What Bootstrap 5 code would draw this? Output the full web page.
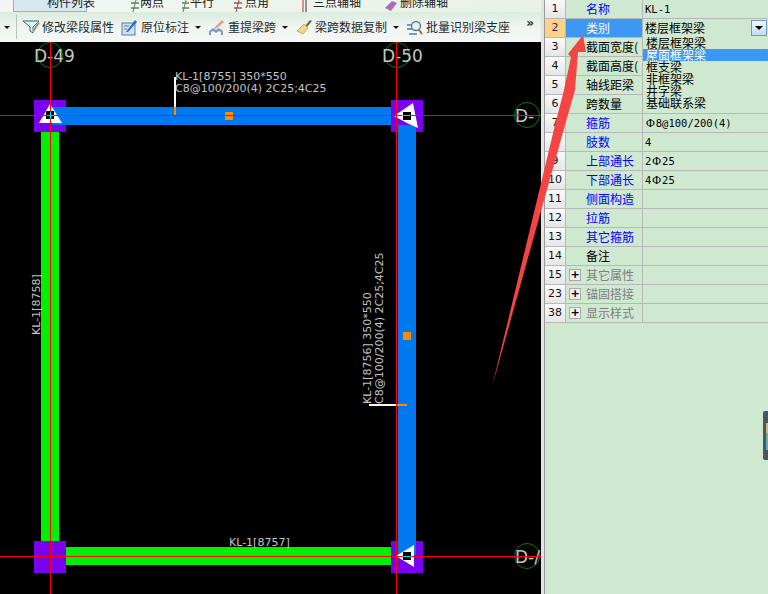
<!DOCTYPE html>
<html lang="zh">
<head>
  <meta charset="UTF-8" />
  <title>梁属性</title>
  <link href="https://cdn.jsdelivr.net/npm/bootstrap@5.3.0/dist/css/bootstrap.min.css" rel="stylesheet" />
  <style>
    html, body { height: 594px; overflow: hidden; }
    body { font-family: "Noto Sans CJK SC", "Liberation Sans", sans-serif; background: #cfe8d0; color: #000; }
    .app-shell { width: 768px; height: 594px; }
    .left-pane { width: 541px; }
    .split-bar { width: 4px; background: #e4e4e4; border-right: 1px solid #9a9a9a; }
    .right-pane { width: 223px; }

    .tool-top { height: 12px; background: linear-gradient(90deg, #f2f6f2, #e8f2e8); overflow: hidden; font-size: 12px; line-height: 16px; color: #222; white-space: nowrap; }
    .tool-top > span, .tool-top > svg { flex: none; }
    .top-label { margin-top: -6px; }
    .tool-active { width: 74px; height: 12px; border: 1px solid #8fb2cf; border-top: 0; background: #d8e8f2; margin-left: 13px; padding-left: 33px; flex: none; }
    .tool-main { height: 30px; background: linear-gradient(#dcecdf, #f1f6f1 55%, #f4f7f3); font-size: 12px; color: #1d2b33; white-space: nowrap; position: relative; padding-left: 4px; }
    .tool-main svg { flex: none; }
    .tool-sep { width: 1px; height: 24px; background: #b9c4bb; margin-left: 6px; }
    .caret-dn { width: 0; height: 0; border-left: 3px solid transparent; border-right: 3px solid transparent; border-top: 3px solid #111; }
    .gap-1px { margin-left: 1px; }
    .gap-2px { margin-left: 2px; }
    .gap-3px { margin-left: 3px; }
    .gap-5px { margin-left: 5px; }
    .gap-6px { margin-left: 6px; }
    .gap-7px { margin-left: 7px; }
    .gap-8px { margin-left: 8px; }
    .gap-17px { margin-left: 17px; }
    .gap-19px { margin-left: 19px; }
    .gap-22px { margin-left: 22px; }
    .gap-31px { margin-left: 31px; }
    .gap-43px { margin-left: 43px; }
    .more-mark { position: absolute; right: 7px; top: 5px; font-size: 12px; line-height: 12px; font-family: "DejaVu Sans", sans-serif; font-weight: 700; }

    .cad-view { width: 541px; height: 552px; display: block; background: #000; }
    .cad-view text { font-family: "DejaVu Sans", "Liberation Sans", sans-serif; fill: #c4c4c4; }

    .prop-row { height: 19px; display: flex; font-size: 12px; line-height: 18px; }
    .prop-no { width: 21px; flex: none; background: linear-gradient(#fafafa, #e6e6e6); border-right: 1px solid #b8b8b8; border-bottom: 1px solid #b8b8b8; text-align: center; font-size: 11px; font-family: "DejaVu Sans", sans-serif; color: #111; }
    .prop-no.is-on { background: #ffd28a; color: #402060; }
    .prop-name { width: 77px; flex: none; padding-left: 20px; border-right: 1px solid #b8b8b8; border-bottom: 1px solid #b8b8b8; white-space: nowrap; overflow: hidden; position: relative; }
    .prop-name.is-link { color: #0000ff; }
    .prop-name.is-grey { color: #808080; }
    .prop-name.is-on { background: #3d98f5; color: #fff; }
    .prop-val { flex: 1; padding-left: 2px; border-bottom: 1px solid #b8b8b8; font-size: 12px; white-space: nowrap; position: relative; }
    .prop-val.mono-val { font-family: "DejaVu Sans Mono", monospace; font-size: 10.5px; }
    .rebar-mark { font-family: "Liberation Serif", serif; font-size: 12px; margin: 0 1px; }
    .expand-box { position: absolute; left: 3px; top: 3px; width: 12px; height: 12px; border: 1px solid #aaa; background: #eee; font: 700 11px/10px "DejaVu Sans", sans-serif; color: #000; text-align: center; }
    .combo-btn { position: absolute; right: 1px; top: 1px; width: 16px; height: 16px; background: linear-gradient(#f0f6fb, #c4dcf0); border: 1px solid #6f98bd; }
    .combo-btn::after { content: ""; position: absolute; left: 3px; top: 5px; border-left: 4px solid transparent; border-right: 4px solid transparent; border-top: 4px solid #000; }

    .combo-list { position: absolute; left: 643px; top: 37px; width: 125px; height: 74px; font-size: 12px; line-height: 12px; background: #cfe8d0; }
    .combo-list div { height: 12px; padding-left: 3px; white-space: nowrap; }
    .combo-list .is-pick { background: #3d98f5; color: #fff; outline: 1px dotted #ff6a10; outline-offset: -1px; }
    .side-handle { position: absolute; right: 0; top: 411px; width: 5px; height: 49px; border-radius: 2px 0 0 2px; background: linear-gradient(#4b5660 25%, #c9bd60 25%, #c9bd60 45%, #5bb5a8 45%, #5bb5a8 80%, #4b5660 80%); border-left: 3px solid #4b5660; }
    .arrow-over { position: absolute; left: 0; top: 0; pointer-events: none; }
  </style>
</head>
<body>
<div class="app-shell d-flex position-relative">
  <div class="left-pane">
    <div class="tool-top d-flex align-items-start">
      <div class="tool-active"><span class="d-block top-label">构件列表</span></div>
      <svg class="gap-43px" width="10" height="12" viewBox="0 0 10 12"><path d="M1 3h8M1 8h8" stroke="#333"/><path d="M6 0L3 12" stroke="#3a9a5a"/></svg>
      <span class="top-label">两点</span>
      <svg class="gap-17px" width="9" height="12" viewBox="0 0 9 12"><path d="M1 3h7M1 8h7" stroke="#333"/><path d="M5 0L2 12" stroke="#3a9a5a"/></svg>
      <span class="top-label">平行</span>
      <svg class="gap-19px" width="11" height="12" viewBox="0 0 11 12"><path d="M1 3h8M1 8h8" stroke="#333"/><path d="M6 0L3 12" stroke="#c03030"/></svg>
      <span class="top-label gap-1px">点角</span>
      <svg class="gap-31px" width="8" height="12" viewBox="0 0 8 12"><path d="M3 0v12" stroke="#c03030"/><path d="M6 0v12" stroke="#333"/></svg>
      <span class="top-label gap-5px">三点辅轴</span>
      <svg class="gap-22px" width="16" height="12" viewBox="0 0 16 12"><path d="M2 8l7-7 5 2-6 8z" fill="#b06ac0"/></svg>
      <span class="top-label gap-1px">删除辅轴</span>
    </div>
    <div class="tool-main d-flex align-items-center">
      <span class="caret-dn"></span>
      <span class="tool-sep"></span>
      <svg class="gap-5px" width="20" height="16" viewBox="0 0 20 16"><path d="M1 2h16l-6 6v6l-3-2V8z" fill="#dff1f6" stroke="#1f6f96"/><path d="M10 12l6-9 2 1-6 9z" fill="#8c8c6a" stroke="#fff" stroke-width=".4"/></svg>
      <span>修改梁段属性</span>
      <svg class="gap-7px" width="16" height="17" viewBox="0 0 16 17"><rect x="1" y="4" width="13" height="12" fill="#cfe0ef" stroke="#5b7fa8"/><path d="M3 7h5M3 10h3" stroke="#5b7fa8"/><path d="M5 13L14 1l2 2-9 10z" fill="#2f6fc0"/></svg>
      <span class="ms-1">原位标注</span>
      <span class="caret-dn gap-6px"></span>
      <svg class="gap-7px" width="16" height="17" viewBox="0 0 16 17"><path d="M1 16v-4l4-3 3 2 3-2 4 3v4h-2v-3l-2-1-3 2-3-2-2 1v3z" fill="#7d9ac0"/><path d="M6 9L14 1l2 2-8 7z" fill="#e3a08a"/></svg>
      <span class="ms-1">重提梁跨</span>
      <span class="caret-dn gap-6px"></span>
      <svg class="gap-8px" width="16" height="17" viewBox="0 0 16 17"><path d="M9 7l5-6 2 1-5 6z" fill="#6f6a3a"/><path d="M1 12l7-7 4 4-5 6z" fill="#ecd983" stroke="#9c8a4a" stroke-width=".6"/></svg>
      <span class="gap-3px">梁跨数据复制</span>
      <span class="caret-dn gap-6px"></span>
      <svg class="gap-8px" width="17" height="17" viewBox="0 0 17 17"><path d="M0 6h6M0 10h5M2 15h8" stroke="#3a86b8" stroke-width="1.5"/><circle cx="9" cy="7" r="4.5" fill="#e8f0f4" stroke="#5d7a8a" stroke-width="1.4"/><path d="M12 11l3 4" stroke="#b0672f" stroke-width="2"/></svg>
      <span class="gap-2px">批量识别梁支座</span>
      <span class="more-mark">»</span>
    </div>
    <svg class="cad-view" viewBox="0 42 541 552">
      <!-- 轴网 -->
      <g fill="none" stroke="#0a7d0a">
        <circle cx="50" cy="55" r="12.5"/>
        <circle cx="397" cy="55" r="12.5"/>
        <circle cx="527" cy="115" r="12.5"/>
        <circle cx="527" cy="556" r="12.5"/>
      </g>
      <text x="34" y="62" font-size="17">D-49</text>
      <text x="382" y="62" font-size="17">D-50</text>
      <text x="515" y="122" font-size="17">D-</text>
      <text x="515" y="563" font-size="17">D-/</text>

      <!-- 梁 -->
      <rect x="41" y="132" width="18" height="410" fill="#00f000"/>
      <rect x="66" y="547" width="326" height="18" fill="#00f000"/>
      <rect x="398" y="130" width="18" height="412" fill="#0078f0"/>

      <!-- 柱 -->
      <rect x="34" y="100" width="32" height="32" fill="#7a00f0"/>
      <rect x="391" y="100" width="32" height="32" fill="#7a00f0"/>
      <rect x="34" y="541" width="32" height="32" fill="#7a00f0"/>
      <rect x="391" y="541" width="32" height="32" fill="#7a00f0"/>
      <rect x="52" y="107" width="339" height="18" fill="#0078f0"/>
      <rect x="398" y="125" width="18" height="7" fill="#0078f0"/>
      <rect x="398" y="541" width="18" height="14" fill="#0078f0"/>

      <!-- 支座三角 -->
      <path d="M50 104L39 123H62z" fill="#fff"/>
      <rect x="46" y="111" width="8" height="8" fill="#000"/>
      <path d="M394 116L413 103L418 128L407 123z" fill="#fff"/>
      <rect x="403" y="112" width="8" height="8" fill="#000"/>
      <path d="M396 556L414 545V567z" fill="#fff"/>
      <rect x="403" y="552" width="8" height="8" fill="#000"/>

      <!-- 标注 -->
      <rect x="225" y="112" width="8" height="8" fill="#ff8a00"/>
      <rect x="403" y="332" width="8" height="8" fill="#ff8a00"/>
      <rect x="174" y="77" width="2" height="30" fill="#fff"/>
      <rect x="174" y="107" width="2" height="8" fill="#ff8a00"/>
      <rect x="369" y="404" width="28" height="2" fill="#fff"/>
      <rect x="397" y="404" width="10" height="2" fill="#ff8a00"/>
      <text x="175" y="80" font-size="11">KL-1[8755] 350*550</text>
      <text x="175" y="92" font-size="11">C8@100/200(4) 2C25;4C25</text>
      <text x="229" y="546" font-size="11">KL-1[8757]</text>
      <text transform="translate(40 335) rotate(-90)" font-size="11">KL-1[8758]</text>
      <text transform="translate(371 404) rotate(-90)" font-size="11">KL-1[8756] 350*550</text>
      <text transform="translate(383 404) rotate(-90)" font-size="11">C8@100/200(4) 2C25;4C25</text>

      <!-- 轴线 -->
      <g stroke="#f00" stroke-width="1" shape-rendering="crispEdges">
        <line x1="0" y1="115.5" x2="541" y2="115.5"/>
        <line x1="0" y1="556.5" x2="541" y2="556.5"/>
        <line x1="50.5" y1="42" x2="50.5" y2="594"/>
        <line x1="396.5" y1="42" x2="396.5" y2="594"/>
      </g>
      <rect x="47" y="115" width="7" height="1" fill="#00e0e0"/>
      <rect x="50" y="112" width="1" height="7" fill="#00e0e0"/>
      <rect x="402" y="115" width="8" height="1" fill="#00e0e0"/>
      <rect x="403" y="556" width="8" height="1" fill="#00e0e0"/>
    </svg>
  </div>
  <div class="split-bar"></div>
  <div class="right-pane">
    <div class="prop-row"><div class="prop-no">1</div><div class="prop-name is-link">名称</div><div class="prop-val mono-val">KL-1</div></div>
    <div class="prop-row"><div class="prop-no is-on">2</div><div class="prop-name is-on">类别</div><div class="prop-val">楼层框架梁<span class="combo-btn"></span></div></div>
    <div class="prop-row"><div class="prop-no">3</div><div class="prop-name">截面宽度(</div><div class="prop-val"></div></div>
    <div class="prop-row"><div class="prop-no">4</div><div class="prop-name">截面高度(</div><div class="prop-val"></div></div>
    <div class="prop-row"><div class="prop-no">5</div><div class="prop-name">轴线距梁</div><div class="prop-val"></div></div>
    <div class="prop-row"><div class="prop-no">6</div><div class="prop-name">跨数量</div><div class="prop-val"></div></div>
    <div class="prop-row"><div class="prop-no">7</div><div class="prop-name is-link">箍筋</div><div class="prop-val mono-val"><span class="rebar-mark">Φ</span>8@100/200(4)</div></div>
    <div class="prop-row"><div class="prop-no">8</div><div class="prop-name is-link">肢数</div><div class="prop-val mono-val">4</div></div>
    <div class="prop-row"><div class="prop-no">9</div><div class="prop-name is-link">上部通长</div><div class="prop-val mono-val">2<span class="rebar-mark">Φ</span>25</div></div>
    <div class="prop-row"><div class="prop-no">10</div><div class="prop-name is-link">下部通长</div><div class="prop-val mono-val">4<span class="rebar-mark">Φ</span>25</div></div>
    <div class="prop-row"><div class="prop-no">11</div><div class="prop-name is-link">侧面构造</div><div class="prop-val"></div></div>
    <div class="prop-row"><div class="prop-no">12</div><div class="prop-name is-link">拉筋</div><div class="prop-val"></div></div>
    <div class="prop-row"><div class="prop-no">13</div><div class="prop-name is-link">其它箍筋</div><div class="prop-val"></div></div>
    <div class="prop-row"><div class="prop-no">14</div><div class="prop-name">备注</div><div class="prop-val"></div></div>
    <div class="prop-row"><div class="prop-no">15</div><div class="prop-name is-grey"><span class="expand-box">+</span>其它属性</div><div class="prop-val"></div></div>
    <div class="prop-row"><div class="prop-no">23</div><div class="prop-name is-grey"><span class="expand-box">+</span>锚固搭接</div><div class="prop-val"></div></div>
    <div class="prop-row"><div class="prop-no">38</div><div class="prop-name is-grey"><span class="expand-box">+</span>显示样式</div><div class="prop-val"></div></div>
  </div>

  <div class="combo-list">
    <div>楼层框架梁</div>
    <div class="is-pick">屋面框架梁</div>
    <div>框支梁</div>
    <div>非框架梁</div>
    <div>井字梁</div>
    <div>基础联系梁</div>
  </div>
  <div class="side-handle"></div>
  <svg class="arrow-over" width="768" height="594"><path d="M492 387L555 125L564 90L571 57L568 54L583 35L586 52L578 52L575 90L565 125z" fill="#f44444"/></svg>
</div>
<script src="https://cdn.jsdelivr.net/npm/bootstrap@5.3.0/dist/js/bootstrap.bundle.min.js"></script>
</body>
</html>
